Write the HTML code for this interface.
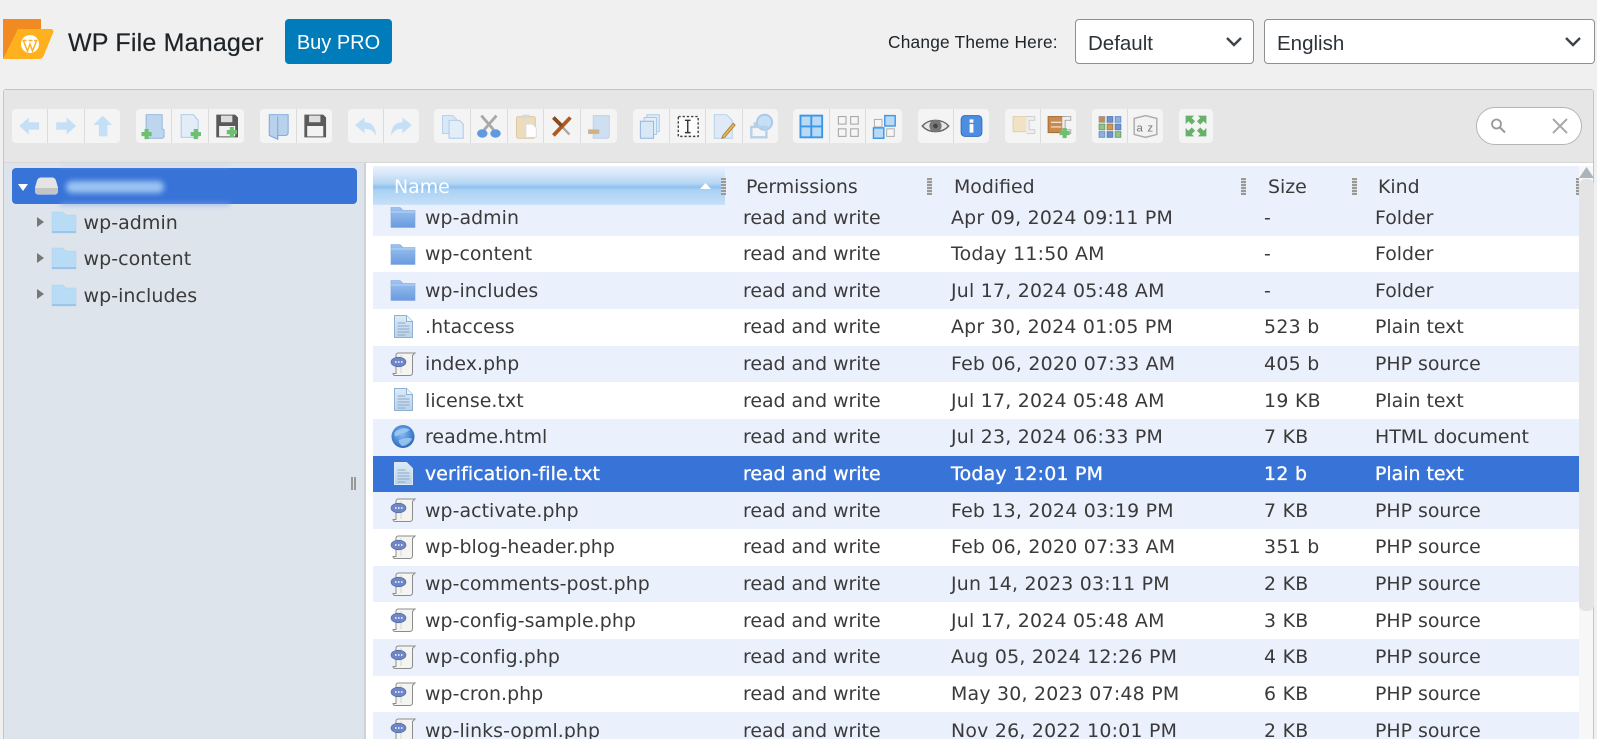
<!DOCTYPE html>
<html><head><meta charset="utf-8"><title>WP File Manager</title>
<style>
html,body{margin:0;padding:0;width:1597px;height:739px;overflow:hidden;background:#f0f0f0}
body{position:relative;font-family:"DejaVu Sans",sans-serif;color:#3a3a3a}
.a{position:absolute}
.sel{position:absolute;top:19px;height:43px;background:#fff;border:1px solid #8c8f94;border-radius:4px;font:20.500px/47px "Liberation Sans",sans-serif;color:#2c3338;padding-left:12px;box-sizing:content-box}
.g{position:absolute;top:108px;height:36px;background:#f4f4f4;border:1px solid #e6e6e6;border-radius:5px;display:flex;box-sizing:border-box;overflow:hidden}
.g svg{flex:1 1 0;width:0;height:34px;box-sizing:border-box;border-right:1px solid #dcdcdc;filter:blur(.35px)}
.g svg:last-child{border-right:0}
.r{position:relative;height:36.67px;width:1206px;line-height:36.67px;font-size:18.9px;letter-spacing:.07px;white-space:nowrap;background:#fff}
.r:nth-child(odd){background:#eaf0fc}
.r.s{background:#3873d8;color:#fff;-webkit-text-stroke:.35px #fff}
.r span{position:absolute;top:.5px}
.r svg{position:absolute;left:17px;top:6px;width:26px;height:26px}
.n{left:52px}.p{left:370px;letter-spacing:0}.m{left:578px;letter-spacing:.24px}.z{left:891px;letter-spacing:.3px}.k{left:1002px;letter-spacing:0}
.h{position:absolute;top:169px;line-height:36px;font-size:18.9px;color:#3a3a3a}
.grip{position:absolute;top:178px;width:5px;height:17px;background:repeating-linear-gradient(#999 0 2px,#ddd 2px 3px)}
.t{position:absolute;left:83.500px;font-size:19px;line-height:30px;color:#3a3a3a;letter-spacing:.05px}
</style></head><body>
<svg width="0" height="0" style="position:absolute">
<defs>
<linearGradient id="fo" x1="0" y1="0" x2="0" y2="1"><stop offset="0" stop-color="#9cc3f0"/><stop offset="1" stop-color="#6a9be0"/></linearGradient>
<linearGradient id="pg" x1="0" y1="0" x2="0" y2="1"><stop offset="0" stop-color="#dcebf7"/><stop offset="1" stop-color="#b8d3ea"/></linearGradient>
<radialGradient id="gl" cx=".45" cy=".4" r=".65"><stop offset="0" stop-color="#8dbbf0"/><stop offset=".7" stop-color="#3f7fd0"/><stop offset="1" stop-color="#2d62ac"/></radialGradient>
<symbol id="folder" viewBox="0 0 26 26"><path d="M1 2.500h9l3 3h12v17H1z" fill="url(#fo)" stroke="#7ea3d3" stroke-width=".6"/><path d="M1 7h24" stroke="#b8d3f4" stroke-width="1"/></symbol>
<symbol id="txt" viewBox="0 0 26 26"><path d="M4.500.500h12l6 6v16h-18z" fill="url(#pg)" stroke="#8fb0d2"/><path d="M16.500.500v6h6" fill="#eef5fb" stroke="#8fb0d2"/><path d="M7.500 8h8M7.500 11h12M7.500 14h12M7.500 17h12M7.500 20h8" stroke="#8ea9c4" stroke-width="1"/></symbol>
<symbol id="txts" viewBox="0 0 26 26"><path d="M4.500.500h12l6 6v16h-18z" fill="url(#pg)" stroke="#dde8f5"/><path d="M7.500 8h8M7.500 11h12M7.500 14h12M7.500 17h12M7.500 20h8" stroke="#8ea9c4" stroke-width="1"/></symbol>
<symbol id="php" viewBox="0 0 26 26"><path d="M8 1h17l-2.500 2.500v17c0 2-1 3-3 3H5c-1 0-2-1-2-2h3V3c0-1 1-2 2-2z" fill="#f4f4f0" stroke="#8c8c8c"/><path d="M11 3v18" stroke="#d5d5d0" stroke-width="1"/><ellipse cx="8.500" cy="10" rx="7.500" ry="4.800" fill="#6f86c6" stroke="#4f659f" stroke-width=".6"/><path d="M5 10h1.500M8 10h1.500M11 10h1.500" stroke="#fff" stroke-width="1.400"/></symbol>
<symbol id="html" viewBox="0 0 26 26"><circle cx="13" cy="11.500" r="11.500" fill="url(#gl)"/><path d="M5 7c4-4 12-5 15-2-2 1-4 3-7 3s-3 2-6 3-3-2-2-4zM9 15c5-2 11-3 13-1-2 4-6 7-10 7-2-2-4-4-3-6z" fill="#a4cdf5" opacity=".8"/></symbol>
<symbol id="tfolder" viewBox="0 0 26 26"><path d="M1 1h11l3 3h10v18H1z" fill="#b9dcf6" stroke="#b0d0ea" stroke-width=".5"/><path d="M1 21h24" stroke="#94bee0" stroke-width="1.500"/></symbol>
<symbol id="plus" viewBox="0 0 10 10"><path d="M3 0h4v3h3v4H7v3H3V7H0V3h3z" fill="#6cc070"/></symbol>
</defs></svg>

<!-- header -->
<svg class="a" style="left:3px;top:19px" width="52" height="41" viewBox="0 0 52 41"><path d="M0 0h38v10H17L0 40z" fill="#f28a22"/><path d="M15 10h33c2 0 3 2 2 4l-9 22c-1 3-3 4-6 4H0z" fill="#ffb01f"/><circle cx="27" cy="25" r="9" fill="#fff"/><path d="M20.500 22l4 10 2.500-7 2.500 7 4-10M19.500 21.500h4M25.500 21.500h4M31 21.500h3.500" stroke="#ffb01f" stroke-width="1.500" fill="none"/></svg>
<div class="a" style="left:68px;top:25px;font:25px/36px 'Liberation Sans',sans-serif;letter-spacing:.2px;color:#1d2327;-webkit-text-stroke:.2px #1d2327;white-space:nowrap">WP File Manager</div>
<div class="a" style="left:285px;top:19px;width:107px;height:45px;background:#007cba;border-radius:4px;color:#fff;font:20px/49px 'Liberation Sans',sans-serif;text-align:center">Buy PRO</div>
<div class="a" style="left:888px;top:29px;font:17.300px/26px 'Liberation Sans',sans-serif;letter-spacing:.22px;color:#1d2327;white-space:nowrap">Change Theme Here:</div>
<div class="sel" style="left:1075px;width:165px">Default</div>
<div class="sel" style="left:1264px;width:317px">English</div>
<svg class="a" style="left:1225px;top:36px" width="18" height="12" viewBox="0 0 18 12"><path d="M2 2l7 7 7-7" fill="none" stroke="#3c434a" stroke-width="2.400"/></svg>
<svg class="a" style="left:1564px;top:36px" width="18" height="12" viewBox="0 0 18 12"><path d="M2 2l7 7 7-7" fill="none" stroke="#3c434a" stroke-width="2.400"/></svg>

<!-- panel -->
<div class="a" style="left:3px;top:89px;width:1591px;height:650px;box-sizing:border-box;border:1px solid #c4c4c4;border-bottom:0;background:#fff;border-radius:3px 3px 0 0"></div>
<div class="a" style="left:4px;top:90px;width:1589px;height:72px;background:#e6e6e6;border-bottom:1px solid #d8d8d8"></div>

<!-- toolbar -->
<div class="g" style="left:11px;width:110px">
<svg viewBox="0 0 36 36"><path d="M7 18l10-9v5h11v8H17v5z" fill="#c5e0f6"/></svg>
<svg viewBox="0 0 36 36"><path d="M29 18l-10-9v5H8v8h11v5z" fill="#c5e0f6"/></svg>
<svg viewBox="0 0 36 36"><path d="M18 7l10 10h-5v12h-9V17H8z" fill="#c5e0f6"/></svg></div>
<div class="g" style="left:135px;width:110px">
<svg viewBox="0 0 36 36"><path d="M10 6h17v15l2 1v7c0 1-1 2-2 2H10z" fill="#bdd6ee" stroke="#8fb4dc"/><use href="#plus" x="5" y="21" width="11" height="11"/></svg>
<svg viewBox="0 0 36 36"><path d="M9 6h13l5 6v18H9z" fill="#e3edf8" stroke="#a9c6e6"/><use href="#plus" x="19" y="21" width="11" height="11"/></svg>
<svg viewBox="0 0 36 36"><path d="M7 6h20l3 3v21H7z" fill="#5a5a5a"/><rect x="12" y="7" width="12" height="7" fill="#ddd"/><rect x="10" y="18" width="17" height="11" fill="#f2f2f2"/><use href="#plus" x="18" y="19" width="11" height="11"/></svg></div>
<div class="g" style="left:259px;width:74px">
<svg viewBox="0 0 36 36"><path d="M9 6h20v19c0 2-1 3-3 3h-8v4l-9-4z" fill="#b8d2ee" stroke="#7aa4d8"/><path d="M18 8v24" stroke="#7aa4d8"/></svg>
<svg viewBox="0 0 36 36"><path d="M7 6h20l3 3v21H7z" fill="#5a5a5a"/><rect x="12" y="7" width="12" height="7" fill="#ddd"/><rect x="10" y="18" width="17" height="11" fill="#f2f2f2"/></svg></div>
<div class="g" style="left:347px;width:73px">
<svg viewBox="0 0 36 36"><path d="M7 17l10-8v5c7 0 12 4 12 14-3-5-6-7-12-7v5z" fill="#c5e0f6"/></svg>
<svg viewBox="0 0 36 36"><path d="M29 17L19 9v5C12 14 7 18 7 28c3-5 6-7 12-7v5z" fill="#c5e0f6"/></svg></div>
<div class="g" style="left:433px;width:185px">
<svg viewBox="0 0 36 36"><path d="M8 7h11l4 4v15H8z" fill="#d8e8f6" stroke="#b5d0ea"/><path d="M15 12h11l4 4v15H15z" fill="#e3eef8" stroke="#a9c8e6"/></svg>
<svg viewBox="0 0 36 36"><path d="M10 7l13 15M26 7L13 22" stroke="#a8a8a8" stroke-width="3"/><ellipse cx="11" cy="26" rx="5.500" ry="4.500" fill="#5f9ade"/><ellipse cx="25" cy="26" rx="5.500" ry="4.500" fill="#5f9ade"/></svg>
<svg viewBox="0 0 36 36"><rect x="8" y="8" width="20" height="23" rx="2" fill="#ecdcbb" stroke="#dcc7a0"/><rect x="14" y="6" width="8" height="4" fill="#d8d8d8"/><path d="M18 16h7l4 4v10H18z" fill="#fff" stroke="#ddd"/></svg>
<svg viewBox="0 0 36 36"><path d="M10 10l16 17" stroke="#a8a8a8" stroke-width="2.500"/><path d="M9 28L27 9" stroke="#b05a22" stroke-width="4"/><path d="M9 9l9 9" stroke="#8a4a20" stroke-width="4"/></svg>
<svg viewBox="0 0 36 36"><path d="M12 7h17v21c0 2-1 3-3 3H12z" fill="#cddff0" stroke="#bcd2e8"/><rect x="7" y="22" width="11" height="4" fill="#d8b070" stroke="#bbb"/></svg></div>
<div class="g" style="left:632px;width:147px">
<svg viewBox="0 0 36 36"><path d="M14 6h13v18H14z" fill="#dcebf8" stroke="#a9c8e6"/><path d="M11 9h13v18H11z" fill="#e3eff9" stroke="#a9c8e6"/><path d="M7 13h14v18H7z" fill="#d8e8f6" stroke="#8fb4dc"/></svg>
<svg viewBox="0 0 36 36"><rect x="8" y="8" width="21" height="21" fill="#fdfdfd" stroke="#444" stroke-width="1.500" stroke-dasharray="2.500 2"/><path d="M15 12h6M15 25h6M18 12v13" stroke="#333" stroke-width="1.500"/></svg>
<svg viewBox="0 0 36 36"><path d="M8 6h13l6 6v19H8z" fill="#dfeaf6" stroke="#b5d0ea"/><path d="M30 17L19 30l-3 1 1-3 11-13z" fill="#e8b860" stroke="#b08030"/></svg>
<svg viewBox="0 0 36 36"><circle cx="22" cy="14" r="8" fill="#c5dff5" stroke="#a9c8e6" stroke-width="2"/><path d="M8 19h16v11H8z" fill="none" stroke="#b5d0ea" stroke-width="2.500"/><path d="M12 14v6" stroke="#b5d0ea" stroke-width="3"/></svg></div>
<div class="g" style="left:792px;width:111px">
<svg viewBox="0 0 36 36"><rect x="7" y="7" width="23" height="23" fill="#b8daf6" stroke="#3d95e6" stroke-width="2"/><path d="M18.500 7v23M7 18.500h23" stroke="#3d95e6" stroke-width="2"/></svg>
<svg viewBox="0 0 36 36"><g fill="#f6f6f6" stroke="#aaa" stroke-width="1.200"><rect x="8" y="8" width="8" height="8"/><rect x="21" y="8" width="8" height="8"/><rect x="8" y="21" width="8" height="8"/><rect x="21" y="21" width="8" height="8"/></g></svg>
<svg viewBox="0 0 36 36"><rect x="8" y="11" width="8" height="8" fill="#f6f6f6" stroke="#aaa"/><rect x="19" y="7" width="11" height="11" fill="#b8daf6" stroke="#3d95e6" stroke-width="1.500"/><rect x="7" y="20" width="11" height="11" fill="#b8daf6" stroke="#3d95e6" stroke-width="1.500"/><rect x="21" y="21" width="8" height="8" fill="#f6f6f6" stroke="#aaa"/></svg></div>
<div class="g" style="left:917px;width:73px">
<svg viewBox="0 0 36 36"><path d="M4 18c7-8 21-8 28 0-7 8-21 8-28 0z" fill="#e8e8e8" stroke="#666" stroke-width="1.500"/><circle cx="18" cy="18" r="6.500" fill="#777"/><circle cx="18" cy="18" r="2.500" fill="#444"/></svg>
<svg viewBox="0 0 36 36"><rect x="7" y="7" width="22" height="22" rx="4" fill="#4d8ee0" stroke="#2f6cc0"/><rect x="16" y="11" width="4" height="3.500" fill="#fff"/><rect x="16" y="16" width="4" height="9" fill="#fff"/></svg></div>
<div class="g" style="left:1004px;width:73px">
<svg viewBox="0 0 36 36"><rect x="8" y="8" width="17" height="16" fill="#f0e2c4" stroke="#e0cfa8"/><path d="M22 8h9v4h-6v10h6v4h-9" fill="#eee" stroke="#ccc"/></svg>
<svg viewBox="0 0 36 36"><rect x="7" y="8" width="18" height="17" fill="#c98a4e" stroke="#a06a30"/><path d="M22 8h9v4h-6v10h6v4h-9" fill="#eee" stroke="#aaa"/><path d="M10 14h11M10 19h11" stroke="#fff"/><use href="#plus" x="19" y="20" width="11" height="11"/></svg></div>
<div class="g" style="left:1091px;width:73px">
<svg viewBox="0 0 36 36"><g stroke-width="1"><rect x="7" y="8" width="6" height="6" fill="#c98a4e" stroke="#999"/><rect x="15.500" y="8" width="6" height="6" fill="#6d93cd" stroke="#5a7eb5"/><rect x="24" y="8" width="6" height="6" fill="#8db0dc" stroke="#6a90c8"/><rect x="7" y="16" width="6" height="6" fill="#8fc48b" stroke="#6aa066"/><rect x="15.500" y="16" width="6" height="6" fill="#d09858" stroke="#a87a40"/><rect x="24" y="16" width="6" height="6" fill="#6d93cd" stroke="#5a7eb5"/><rect x="7" y="24" width="6" height="6" fill="#8db0dc" stroke="#6a90c8"/><rect x="15.500" y="24" width="6" height="6" fill="#6d93cd" stroke="#5a7eb5"/><rect x="24" y="24" width="6" height="6" fill="#8fc48b" stroke="#6aa066"/></g></svg>
<svg viewBox="0 0 36 36"><path d="M6 10l12-3 12 3v17l-12 3-12-3z" fill="#f2f2f2" stroke="#aaa" stroke-width="1.500"/><text x="8.500" y="24" font-family="Liberation Sans,sans-serif" font-size="12" fill="#777">a</text><text x="20" y="24" font-family="Liberation Sans,sans-serif" font-size="12" fill="#777">z</text></svg></div>
<div class="g" style="left:1178px;width:36px">
<svg viewBox="0 0 36 36"><g fill="#67b26b"><path d="M7 7h9l-2.500 2.500 3.500 3.500-3.500 3.500-3.500-3.500L7 16z"/><path d="M29 7h-9l2.500 2.500-3.500 3.500 3.500 3.500 3.500-3.500L29 16z"/><path d="M7 29h9l-2.500-2.500 3.500-3.500-3.500-3.500-3.500 3.500L7 20z"/><path d="M29 29h-9l2.500-2.500-3.500-3.500 3.500-3.500 3.500 3.500L29 20z"/></g></svg></div>

<!-- search -->
<div class="a" style="left:1476px;top:107px;width:104px;height:36px;box-sizing:content-box;background:#fff;border:1px solid #b5b5b5;border-radius:19px"></div>
<svg class="a" style="left:1489px;top:116px" width="18" height="20" viewBox="0 0 18 20"><circle cx="7.500" cy="8" r="4.500" fill="none" stroke="#999" stroke-width="1.800"/><path d="M11 11.500l5 5" stroke="#999" stroke-width="2"/></svg>
<svg class="a" style="left:1551px;top:117px" width="18" height="18" viewBox="0 0 18 18"><path d="M2 2l14 14M16 2L2 16" stroke="#a8a8a8" stroke-width="2"/></svg>

<!-- tree -->
<div class="a" style="left:4px;top:163px;width:360px;height:576px;background:#dee4ec"></div>
<div class="a" style="left:364px;top:163px;width:2px;height:576px;background:#cfd2d6"></div>
<div class="a" style="left:12px;top:168px;width:345px;height:36px;background:#3873d8;border-radius:4px"></div>
<svg class="a" style="left:17px;top:183px" width="12" height="9" viewBox="0 0 12 9"><path d="M1 1h10L6 8z" fill="#fff"/></svg>
<svg class="a" style="left:34px;top:176px" width="25" height="20" viewBox="0 0 25 20"><path d="M7 1.500h11c2 0 3 1 4 3l2 7v4c0 1-1 3-3 3H4c-2 0-3-2-3-3v-4l2-7c1-2 2-3 4-3z" fill="#e4e4e4"/><path d="M1 12h23v3c0 1-1 3-3 3H4c-2 0-3-2-3-3z" fill="#c4c4c4"/></svg>
<div class="a" style="left:66px;top:181px;width:98px;height:12px;background:#9cc4f2;filter:blur(3px);border-radius:6px"></div>
<div class="a" style="left:60px;top:162px;width:170px;height:5px;background:#c4d4ea;filter:blur(2px);opacity:.35"></div>
<div class="a" style="left:60px;top:202px;width:170px;height:4px;background:#7da4e4;filter:blur(2px);opacity:.5"></div>

<svg class="a" style="left:36px;top:216px" width="9" height="12" viewBox="0 0 9 12"><path d="M1 1l7 5-7 5z" fill="#777"/></svg>
<svg class="a" style="left:51px;top:211px;width:26px;height:26px"><use href="#tfolder" width="26" height="26"/></svg>
<div class="t" style="top:208px">wp-admin</div>
<svg class="a" style="left:36px;top:252px" width="9" height="12" viewBox="0 0 9 12"><path d="M1 1l7 5-7 5z" fill="#777"/></svg>
<svg class="a" style="left:51px;top:247px;width:26px;height:26px"><use href="#tfolder" width="26" height="26"/></svg>
<div class="t" style="top:244px">wp-content</div>
<svg class="a" style="left:36px;top:288px" width="9" height="12" viewBox="0 0 9 12"><path d="M1 1l7 5-7 5z" fill="#777"/></svg>
<svg class="a" style="left:51px;top:284px;width:26px;height:26px"><use href="#tfolder" width="26" height="26"/></svg>
<div class="t" style="top:281px">wp-includes</div>
<div class="a" style="left:351px;top:477px;width:2px;height:13px;background:#999;box-shadow:3px 0 0 #999"></div>

<!-- rows -->
<div class="a" style="left:373px;top:199px;width:1206px;height:540px;overflow:hidden">
<div class="r"><svg><use href="#folder"/></svg><span class="n">wp-admin</span><span class="p">read and write</span><span class="m">Apr 09, 2024 09:11 PM</span><span class="z">-</span><span class="k">Folder</span></div>
<div class="r"><svg><use href="#folder"/></svg><span class="n">wp-content</span><span class="p">read and write</span><span class="m">Today 11:50 AM</span><span class="z">-</span><span class="k">Folder</span></div>
<div class="r"><svg><use href="#folder"/></svg><span class="n">wp-includes</span><span class="p">read and write</span><span class="m">Jul 17, 2024 05:48 AM</span><span class="z">-</span><span class="k">Folder</span></div>
<div class="r"><svg><use href="#txt"/></svg><span class="n">.htaccess</span><span class="p">read and write</span><span class="m">Apr 30, 2024 01:05 PM</span><span class="z">523 b</span><span class="k">Plain text</span></div>
<div class="r"><svg><use href="#php"/></svg><span class="n">index.php</span><span class="p">read and write</span><span class="m">Feb 06, 2020 07:33 AM</span><span class="z">405 b</span><span class="k">PHP source</span></div>
<div class="r"><svg><use href="#txt"/></svg><span class="n">license.txt</span><span class="p">read and write</span><span class="m">Jul 17, 2024 05:48 AM</span><span class="z">19 KB</span><span class="k">Plain text</span></div>
<div class="r"><svg><use href="#html"/></svg><span class="n">readme.html</span><span class="p">read and write</span><span class="m">Jul 23, 2024 06:33 PM</span><span class="z">7 KB</span><span class="k">HTML document</span></div>
<div class="r s"><svg><use href="#txts"/></svg><span class="n">verification-file.txt</span><span class="p">read and write</span><span class="m">Today 12:01 PM</span><span class="z">12 b</span><span class="k">Plain text</span></div>
<div class="r"><svg><use href="#php"/></svg><span class="n">wp-activate.php</span><span class="p">read and write</span><span class="m">Feb 13, 2024 03:19 PM</span><span class="z">7 KB</span><span class="k">PHP source</span></div>
<div class="r"><svg><use href="#php"/></svg><span class="n">wp-blog-header.php</span><span class="p">read and write</span><span class="m">Feb 06, 2020 07:33 AM</span><span class="z">351 b</span><span class="k">PHP source</span></div>
<div class="r"><svg><use href="#php"/></svg><span class="n">wp-comments-post.php</span><span class="p">read and write</span><span class="m">Jun 14, 2023 03:11 PM</span><span class="z">2 KB</span><span class="k">PHP source</span></div>
<div class="r"><svg><use href="#php"/></svg><span class="n">wp-config-sample.php</span><span class="p">read and write</span><span class="m">Jul 17, 2024 05:48 AM</span><span class="z">3 KB</span><span class="k">PHP source</span></div>
<div class="r"><svg><use href="#php"/></svg><span class="n">wp-config.php</span><span class="p">read and write</span><span class="m">Aug 05, 2024 12:26 PM</span><span class="z">4 KB</span><span class="k">PHP source</span></div>
<div class="r"><svg><use href="#php"/></svg><span class="n">wp-cron.php</span><span class="p">read and write</span><span class="m">May 30, 2023 07:48 PM</span><span class="z">6 KB</span><span class="k">PHP source</span></div>
<div class="r"><svg><use href="#php"/></svg><span class="n">wp-links-opml.php</span><span class="p">read and write</span><span class="m">Nov 26, 2022 10:01 PM</span><span class="z">2 KB</span><span class="k">PHP source</span></div>
</div>

<!-- table header -->
<div class="a" style="left:373px;top:166px;width:1206px;height:37px;background:#eaf0fc"></div>
<div class="a" style="left:373px;top:166px;width:352px;height:39px;background:linear-gradient(#eaf3fc 0%,#d4e6f8 22%,#b4d6f4 45%,#8fc1ef 54%,#a9d1f4 62%,#c7e1f8 100%)"></div>
<div class="h" style="left:394px;color:#fff">Name</div>
<svg class="a" style="left:699px;top:182px" width="13" height="8" viewBox="0 0 13 8"><path d="M1 7l5.500-6L12 7z" fill="#fff"/></svg>
<div class="h" style="left:746px">Permissions</div>
<div class="h" style="left:954px">Modified</div>
<div class="h" style="left:1268px">Size</div>
<div class="h" style="left:1378px">Kind</div>
<div class="grip" style="left:721px"></div>
<div class="grip" style="left:927px"></div>
<div class="grip" style="left:1241px"></div>
<div class="grip" style="left:1352px"></div>
<div class="grip" style="left:1576px;width:3px"></div>

<!-- scrollbar -->
<div class="a" style="left:1579px;top:166px;width:14px;height:573px;background:#f7f7f7"></div>
<svg class="a" style="left:1579px;top:166px" width="15" height="13" viewBox="0 0 15 13"><path d="M0 12L7.500 1 15 12z" fill="#aab4bd"/></svg>
<div class="a" style="left:1579px;top:179px;width:15px;height:432px;background:#e4e4e4;border-radius:6px"></div>
</body></html>
